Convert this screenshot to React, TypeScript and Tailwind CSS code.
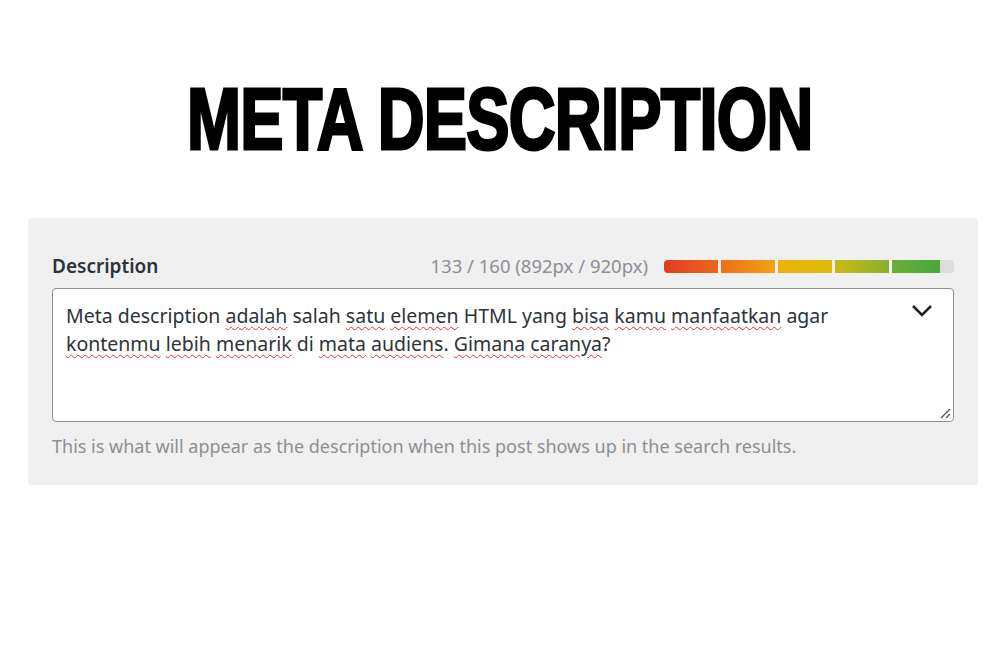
import React from 'react';

// Segments of the length indicator, red to green
const SEGMENTS = [
  'from-[#e23b22] to-[#ee651b]',
  'from-[#ef6d1a] to-[#f4a10f]',
  'from-[#eeb10b] to-[#dcbd08]',
  'from-[#cbb911] to-[#86b02a]',
  'from-[#6cae34] to-[#45a83b]',
];

function LengthBar() {
  return (
    <div className="flex h-[13px] w-[290px] gap-[3px] overflow-hidden rounded-[4px]">
      {SEGMENTS.map((s, i) => (
        <div
          key={i}
          className={`h-full bg-gradient-to-r ${s} ${i === 4 ? 'w-[48px]' : 'w-[54px]'}`}
        />
      ))}
      <div className="-ml-[3px] h-full flex-1 bg-[#dcdcde]" />
    </div>
  );
}

function Squiggle({ children }: { children: React.ReactNode }) {
  return (
    <span className="underline decoration-wavy decoration-[#e0362b] decoration-[1.3px] underline-offset-[3px]">
      {children}
    </span>
  );
}

export default function App() {
  return (
    <div className="min-h-[667px] w-full bg-white font-['Noto_Sans',sans-serif]">
      <div className="flex justify-center pt-[75px]">
        <h1 className="origin-center scale-x-[0.745] font-['Liberation_Sans_Narrow','Liberation_Sans',sans-serif] text-[87px] font-bold leading-none tracking-[-1px] text-black [-webkit-text-stroke:3px_black]">
          META DESCRIPTION
        </h1>
      </div>

      <div className="ml-[28px] mt-[56px] h-[267px] w-[950px] rounded-[4px] bg-[#f0f0f1] px-[24px] pt-[34px]">
        <div className="flex items-center justify-between">
          <span className="text-[19px] font-semibold text-[#2c3338]">Description</span>
          <div className="flex items-center gap-[16px]">
            <span className="text-[18.5px] text-[#8c8f94]">133 / 160 (892px / 920px)</span>
            <LengthBar />
          </div>
        </div>

        <div className="relative mt-[7px] h-[134px] w-[902px] rounded-[4px] border border-[#8c8f94] bg-white pl-[13px] pr-[60px] pt-[13px]">
          <p className="text-[19.5px] leading-[28px] text-[#2c3338]">
            Meta description <Squiggle>adalah</Squiggle> salah <Squiggle>satu</Squiggle>{' '}
            <Squiggle>elemen</Squiggle> HTML yang <Squiggle>bisa</Squiggle> <Squiggle>kamu</Squiggle>{' '}
            <Squiggle>manfaatkan</Squiggle> agar
            <br />
            <Squiggle>kontenmu</Squiggle> <Squiggle>lebih</Squiggle> <Squiggle>menarik</Squiggle> di{' '}
            <Squiggle>mata</Squiggle> <Squiggle>audiens</Squiggle>. <Squiggle>Gimana</Squiggle>{' '}
            <Squiggle>caranya</Squiggle>?
          </p>
          <svg
            className="absolute right-[20px] top-[15px]"
            width="22"
            height="13"
            viewBox="0 0 22 13"
            fill="none"
          >
            <path d="M2 2l9 9 9-9" stroke="#1d2327" strokeWidth="2.6" />
          </svg>
          <svg className="absolute bottom-[2px] right-[2px]" width="12" height="12" viewBox="0 0 12 12">
            <path d="M11 2L2 11M11 7L7 11" stroke="#50575e" strokeWidth="1.3" />
          </svg>
        </div>

        <p className="mt-[11px] text-[18px] text-[#8c8f94]">
          This is what will appear as the description when this post shows up in the search results.
        </p>
      </div>
    </div>
  );
}
